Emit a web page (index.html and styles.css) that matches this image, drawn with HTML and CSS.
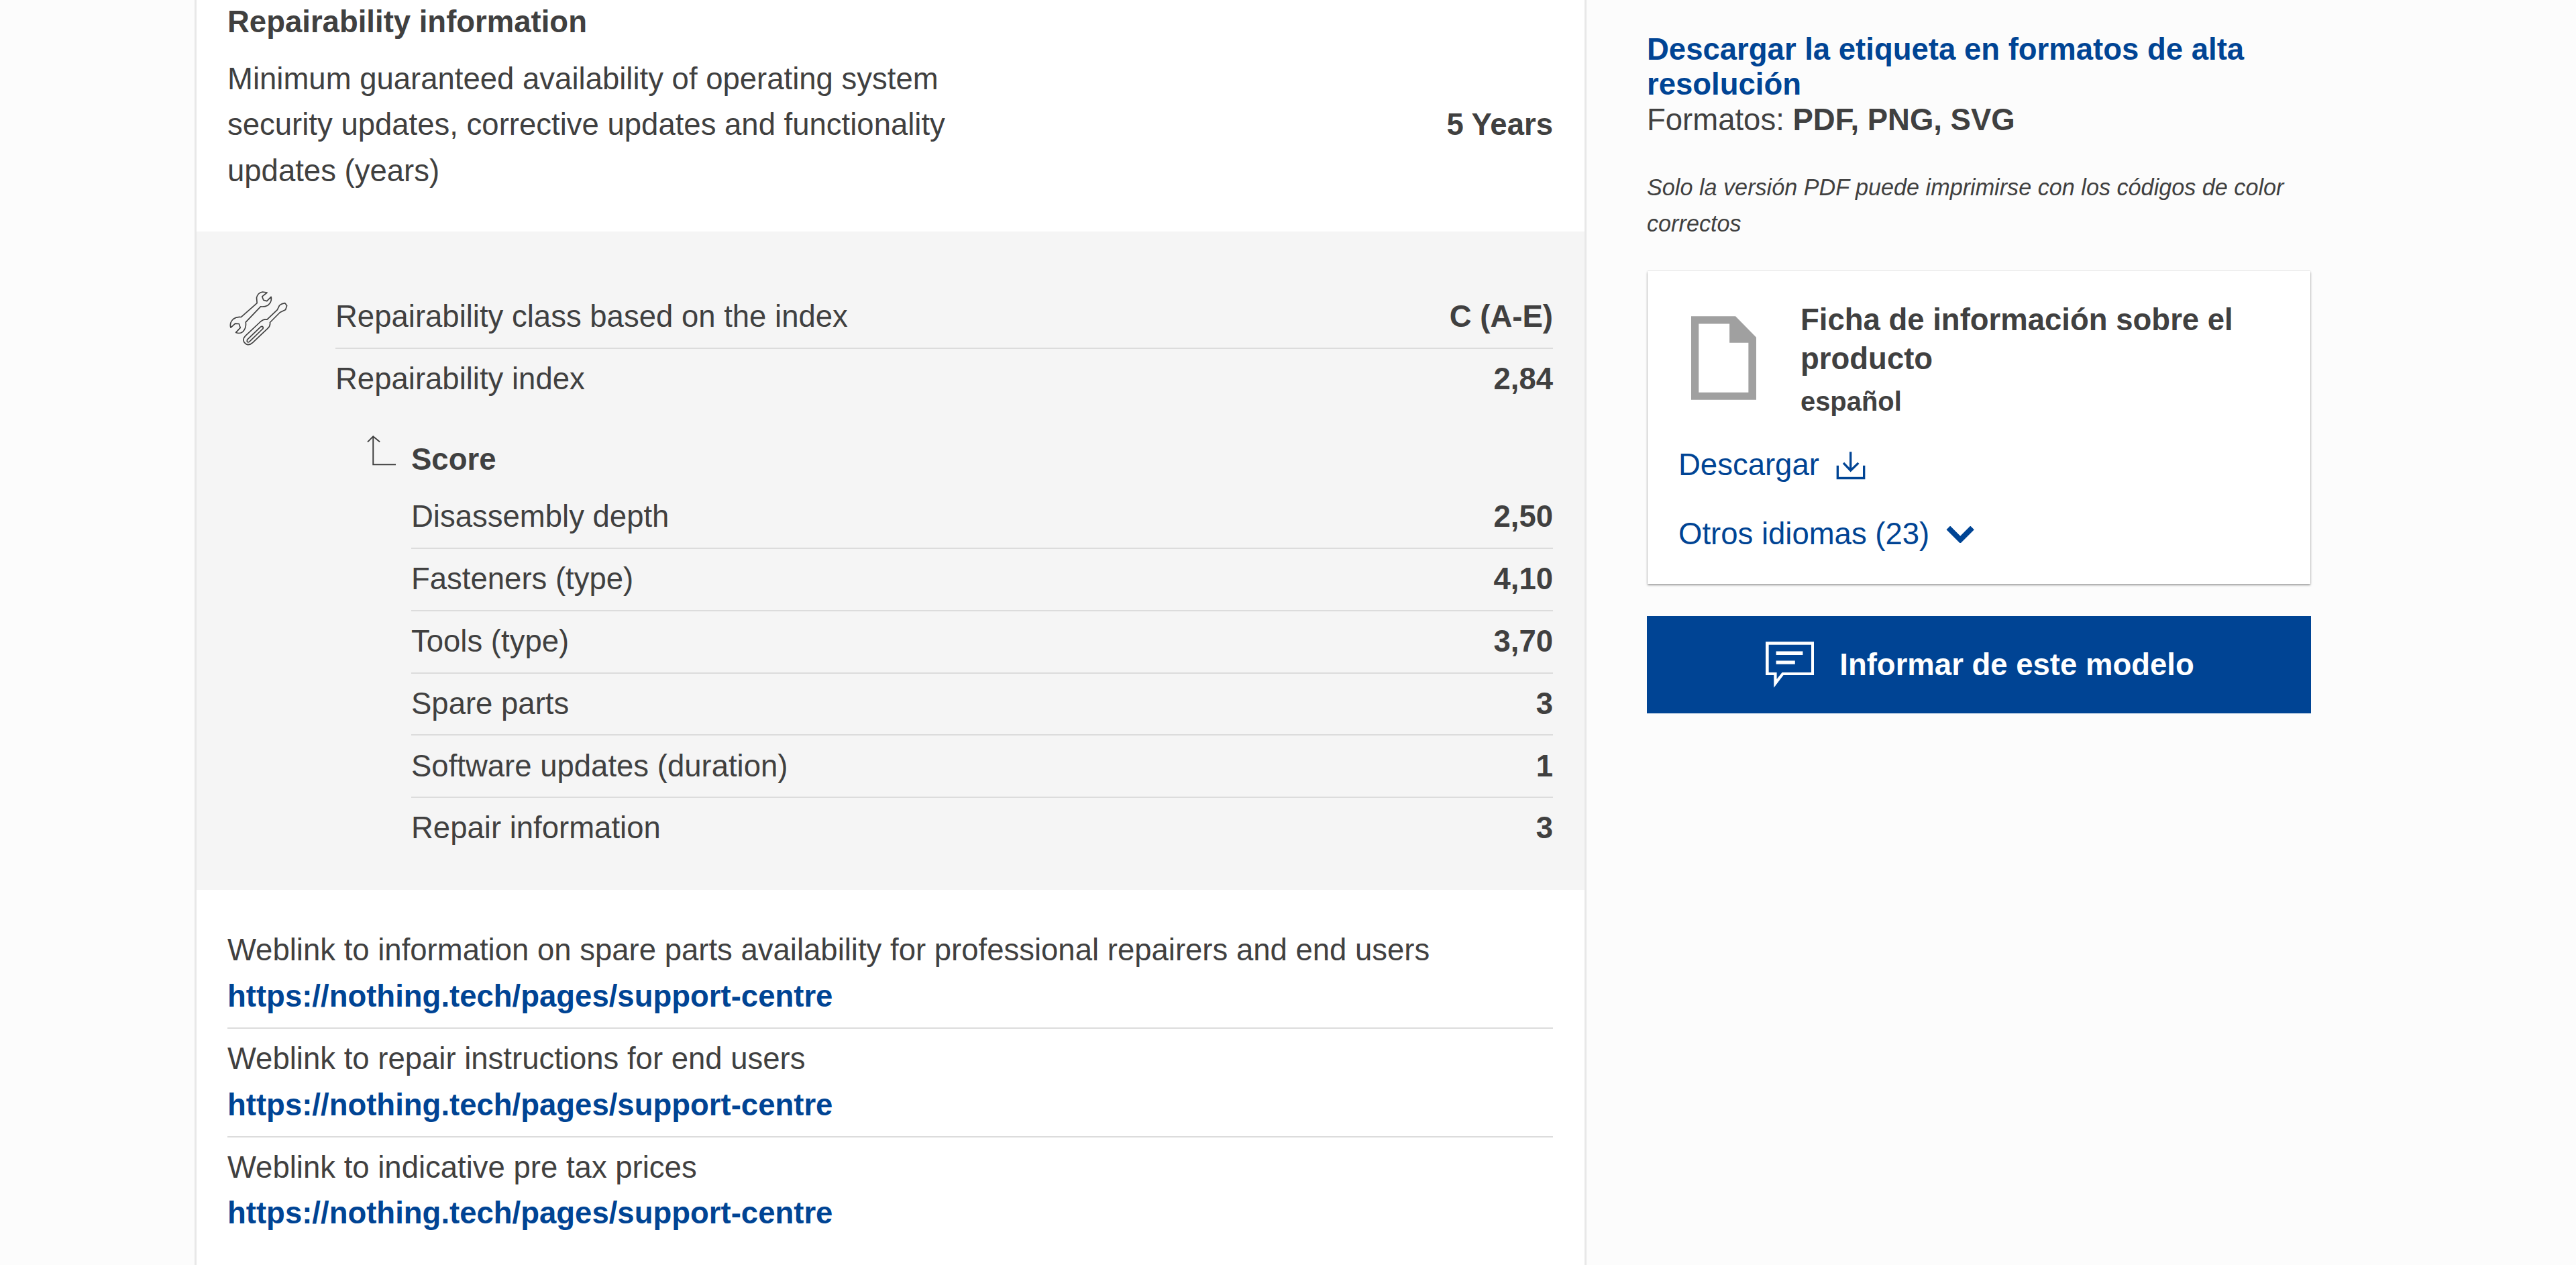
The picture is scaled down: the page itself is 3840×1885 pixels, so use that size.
FILE: index.html
```html
<!DOCTYPE html>
<html lang="es">
  <head>
    <meta charset="UTF-8" />
    <title>Repairability information</title>
    <link rel="stylesheet" href="styles.css">
  </head>
  <body>
    <div class="page">
      <main class="panel">
        <h2 class="panel-title">Repairability information</h2>
        <div class="update-row">
          <p class="update-text">Minimum guaranteed availability of operating system security updates, corrective updates and functionality updates (years)</p>
          <b>5 Years</b>
        </div>

        <section class="repair-box">
          <svg class="tools-icon" viewBox="120 92 268 250">
            <path d="M245 124 Q250 102 272 98 L292 101 L270 119 L276 135 L291 139 L310 120 Q315 142 296 158 Q280 166 263 164 L196 234 Q200 258 184 276 Q170 288 152 280 L172 259 L166 241 L149 240 L129 258 Q122 238 140 220 Q156 208 175 211 L247 148 Z" />
            <path d="M358 152 L372 148 L381 160 L375 178 L350 190 L305 235 Q308 250 295 262 L228 325 Q205 345 190 325 Q180 310 195 295 L262 232 Q278 218 292 222 L338 178 L348 158 Z" />
            <path d="M203 312 L262 256 Q270 250 274 256 Q276 262 270 266 L212 322 Q205 326 202 320 Z" />
          </svg>
          <div class="repair-body">
            <div class="row row-line"><span>Repairability class based on the index</span><b>C (A-E)</b></div>
            <div class="row"><span>Repairability index</span><b>2,84</b></div>

            <div class="score-head">
              <svg class="score-arrow" viewBox="735 735 140 145">
                <path d="M740 770 L765 745 L795 770 M765 745 V872 H867" />
              </svg>
              <b>Score</b>
            </div>
            <div class="score-list">
              <div class="row row-line"><span>Disassembly depth</span><b>2,50</b></div>
              <div class="row row-line"><span>Fasteners (type)</span><b>4,10</b></div>
              <div class="row row-line"><span>Tools (type)</span><b>3,70</b></div>
              <div class="row row-line"><span>Spare parts</span><b>3</b></div>
              <div class="row row-line"><span>Software updates (duration)</span><b>1</b></div>
              <div class="row"><span>Repair information</span><b>3</b></div>
            </div>
          </div>
        </section>

        <section class="weblinks">
          <div class="weblink">
            <div>Weblink to information on spare parts availability for professional repairers and end users</div>
            <a href="#">https://nothing.tech/pages/support-centre</a>
          </div>
          <div class="weblink">
            <div>Weblink to repair instructions for end users</div>
            <a href="#">https://nothing.tech/pages/support-centre</a>
          </div>
          <div class="weblink">
            <div>Weblink to indicative pre tax prices</div>
            <a href="#">https://nothing.tech/pages/support-centre</a>
          </div>
        </section>
      </main>

      <aside class="sidebar">
        <a class="label-link" href="#">Descargar la etiqueta en formatos de alta resolución</a>
        <div class="formats">Formatos: <b>PDF, PNG, SVG</b></div>
        <p class="note">Solo la versión PDF puede imprimirse con los códigos de color correctos</p>

        <div class="card">
          <div class="card-head">
            <svg class="doc-icon" viewBox="123 123 292 375">
              <path fill-rule="evenodd" d="M123 123 H322 L415 218 V498 H123 Z M157 157 V465 H380 V242 H295 V157 Z" />
            </svg>
            <div>
              <div class="card-title">Ficha de información sobre el producto</div>
              <div class="card-lang">español</div>
            </div>
          </div>
          <a class="card-link" href="#">Descargar
            <svg class="download-icon" viewBox="105 65 132 128">
              <path d="M112 130 V186 H230 V130 M170 68 V152 M138 118 L170 152 L205 118" />
            </svg>
          </a>
          <a class="card-link" href="#">Otros idiomas (23)
            <svg class="chevron-icon" viewBox="604 395 130 75">
              <path d="M614 402 L668 456 L722 402" />
            </svg>
          </a>
        </div>

        <button class="report-btn" type="button">
          <svg class="speech-icon" viewBox="38 72 217 206">
            <path fill-rule="evenodd" d="M38 72 H255 V222 H118 L75 278 V222 H38 Z M52 85 V210 H88 V240 L112 210 H243 V85 Z" />
            <path d="M85 115 H205 V131 H85 Z M85 157 H170 V173 H85 Z" />
          </svg>
          Informar de este modelo
        </button>
      </aside>
    </div>
  </body>
</html>
```

FILE: styles.css
```css
body {
  margin: 0;
  background-color: #fcfcfc;
  color: #404040;
  font-family: "Liberation Sans", Arial, sans-serif;
  font-size: 45.5px;
  line-height: 68.4px;
  height: 1885px;
  overflow: hidden;
}

.page {
  display: flex;
  align-items: flex-start;
  padding-left: 290px;
}

a {
  color: #004494;
  text-decoration: none;
}

/* Main panel */
.panel {
  width: 2069px;
  height: 1885px;
  flex-shrink: 0;
  background-color: #fff;
  border-left: 3px solid #e8e8e8;
  border-right: 3px solid #e8e8e8;
}

.panel-title {
  margin: 0 47px 18px 46px;
  font-size: 45.5px;
  line-height: 66px;
}

.update-row {
  display: flex;
  align-items: center;
  justify-content: space-between;
  margin: 0 47px 56px 46px;
}

.update-text {
  margin: 0;
  width: 1200px;
}

.repair-box {
  display: flex;
  padding: 82px 47px 46px 46px;
  background-color: #f5f5f5;
}

.tools-icon {
  width: 89px;
  height: 83px;
  margin: 6px 70px 0 2px;
  flex-shrink: 0;
  fill: none;
  stroke: #404040;
  stroke-width: 5;
  stroke-linejoin: round;
}

.repair-body {
  flex: 1;
}

.row {
  display: flex;
  justify-content: space-between;
  padding: 11.2px 0;
}

.row-line {
  border-bottom: 2px solid #dcdcdc;
}

.score-head {
  display: flex;
  align-items: flex-start;
  margin-top: 40px;
  margin-bottom: 6px;
}

.score-arrow {
  width: 47px;
  height: 48px;
  margin: -4px 20px 0 46px;
  fill: none;
  stroke: #404040;
  stroke-width: 6;
}

.score-list {
  margin-left: 113px;
}

/* Weblinks */
.weblinks {
  padding: 45px 47px 0 46px;
}

.weblink {
  padding: 11.5px 0;
  border-bottom: 2px solid #dcdcdc;
}

.weblink:last-child {
  border-bottom: none;
}

.weblink a {
  display: block;
  font-weight: bold;
}

/* Right column */
.sidebar {
  width: 990px;
  margin-left: 90px;
  padding-top: 48px;
}

.label-link {
  display: block;
  font-weight: bold;
  line-height: 52px;
}

.formats {
  line-height: 53px;
}

.note {
  margin: 47px 0 44px;
  font-size: 34.2px;
  line-height: 54px;
  font-style: italic;
}

.card {
  height: 466px;
  box-sizing: border-box;
  margin: 0 1px;
  padding: 44px 46px 0;
  background-color: #fff;
  box-shadow: 0 2px 3px rgba(0, 0, 0, 0.35), 0 0 2px rgba(0, 0, 0, 0.2);
}

.card-head {
  display: flex;
  align-items: flex-start;
  margin-bottom: 31px;
}

.doc-icon {
  width: 97px;
  height: 125px;
  margin: 23px 66px 0 19px;
  flex-shrink: 0;
  fill: #a0a0a0;
}

.card-title {
  font-weight: bold;
  line-height: 58px;
}

.card-lang {
  margin-top: 4px;
  font-size: 39.9px;
  font-weight: bold;
  line-height: 60px;
}

.card-link {
  display: flex;
  align-items: center;
  gap: 25px;
  margin-bottom: 34.6px;
}

.download-icon {
  width: 44px;
  height: 43px;
  fill: none;
  stroke: #004494;
  stroke-width: 10;
}

.chevron-icon {
  width: 43px;
  height: 25px;
  fill: none;
  stroke: #004494;
  stroke-width: 24;
}

.report-btn {
  display: flex;
  align-items: center;
  justify-content: center;
  gap: 38px;
  width: 100%;
  height: 145px;
  margin-top: 48px;
  padding: 0 0 0 3px;
  border: none;
  background-color: #004494;
  color: #fff;
  font-family: inherit;
  font-size: 45.5px;
  font-weight: bold;
}

.speech-icon {
  width: 72px;
  height: 69px;
  fill: #fff;
}
```
